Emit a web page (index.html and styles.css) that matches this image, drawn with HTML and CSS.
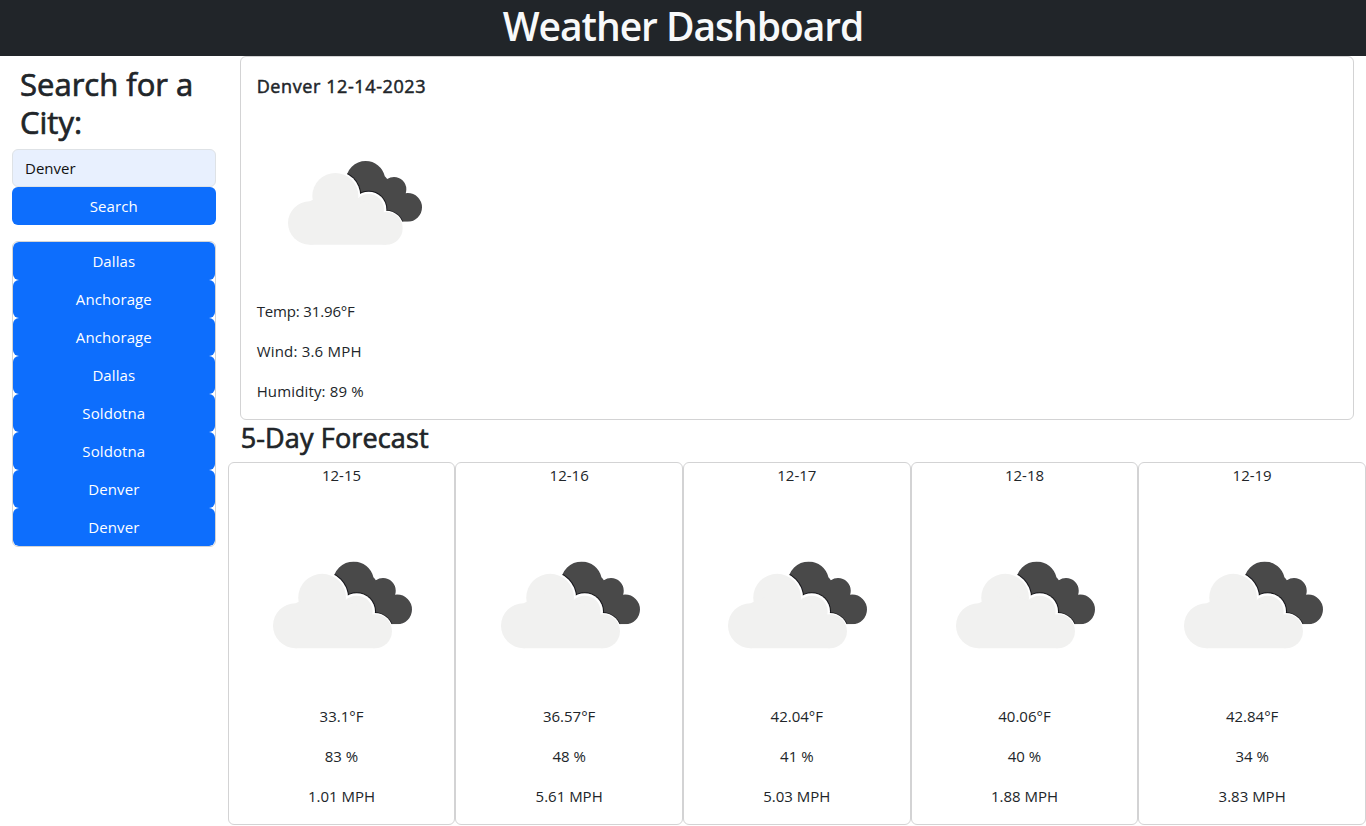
FILE: index.html
```
<!DOCTYPE html>
<html lang="en">
<head>
<meta charset="utf-8">
<title>Weather Dashboard</title>
<link rel="stylesheet" href="styles.css">
</head>
<body>
<svg class="defs" aria-hidden="true">
  <defs>
    <clipPath id="dark-clip">
      <circle cx="287" cy="92" r="59"/><circle cx="372" cy="118" r="37"/><circle cx="413" cy="172" r="43"/><path d="M240 60L346 80L400 150L413 215H340L240 160Z"/>
    </clipPath>
    <filter id="soft"><feGaussianBlur stdDeviation="2"/></filter>
    <filter id="edge"><feGaussianBlur stdDeviation="1.8"/></filter>
    <symbol id="clouds" viewBox="0 0 510 330">
      <g filter="url(#edge)">
        <g clip-path="url(#dark-clip)">
          <path fill="#48484a" d="M220 20H470V230H220Z"/>
          <g fill="#18181a" filter="url(#soft)"><circle cx="196" cy="138" r="78"/><circle cx="296" cy="178" r="56"/><circle cx="348" cy="235" r="55"/></g>
        </g>
        <g fill="#fff"><circle cx="196" cy="138" r="75"/><circle cx="296" cy="178" r="53"/><circle cx="348" cy="235" r="53"/></g>
        <g fill="#f1f1f0"><circle cx="119" cy="219" r="65"/><circle cx="196" cy="138" r="69"/><circle cx="296" cy="178" r="46"/><circle cx="349" cy="235" r="49"/><path d="M119 154L196 120L296 160L348 200V284H119Z"/></g>
      </g>
    </symbol>
  </defs>
</svg>
<header class="header"><h1 class="title">Weather Dashboard</h1></header>
<div class="layout">
  <aside class="sidebar">
    <h2 class="search-title">Search for a City:</h2>
    <input class="search-input" type="text" value="Denver">
    <button class="btn">Search</button>
    <div class="history">
      <button class="btn">Dallas</button>
      <button class="btn">Anchorage</button>
      <button class="btn">Anchorage</button>
      <button class="btn">Dallas</button>
      <button class="btn">Soldotna</button>
      <button class="btn">Soldotna</button>
      <button class="btn">Denver</button>
      <button class="btn">Denver</button>
    </div>
  </aside>
  <main class="content">
    <section class="card current">
      <h5 class="city">Denver 12-14-2023</h5>
      <svg class="current-icon"><use href="#clouds"/></svg>
      <p class="temp">Temp: 31.96°F</p>
      <p class="wind">Wind: 3.6 MPH</p>
      <p class="humidity">Humidity: 89 %</p>
    </section>
    <h3 class="forecast-title">5-Day Forecast</h3>
    <section class="forecast">
      <article class="card day"><p class="date">12-15</p><svg class="day-icon"><use href="#clouds"/></svg><p>33.1°F</p><p>83 %</p><p>1.01 MPH</p></article>
      <article class="card day"><p class="date">12-16</p><svg class="day-icon"><use href="#clouds"/></svg><p>36.57°F</p><p>48 %</p><p>5.61 MPH</p></article>
      <article class="card day"><p class="date">12-17</p><svg class="day-icon"><use href="#clouds"/></svg><p>42.04°F</p><p>41 %</p><p>5.03 MPH</p></article>
      <article class="card day"><p class="date">12-18</p><svg class="day-icon"><use href="#clouds"/></svg><p>40.06°F</p><p>40 %</p><p>1.88 MPH</p></article>
      <article class="card day"><p class="date">12-19</p><svg class="day-icon"><use href="#clouds"/></svg><p>42.84°F</p><p>34 %</p><p>3.83 MPH</p></article>
    </section>
  </main>
</div>
</body>
</html>
```
FILE: styles.css
```
* { box-sizing: border-box; }
body { margin: 0; background: #fff; color: #212529; font: 400 15px/24px "Open Sans", "Noto Sans", sans-serif; overflow: hidden; }
h1, h2, h3, h5, p { margin: 0; }
.defs { display: block; width: 0; height: 0; }
.header { height: 56px; background: #212529; color: #f8f9fa; text-align: center; }
.title { font-size: 39px; line-height: 52px; font-weight: 600; letter-spacing: -1.05px; }
.layout { display: flex; height: 770px; }
.sidebar { width: 16.6667%; padding: 8px 12px 0; }
.search-title { padding: 1px 8px 0; margin-bottom: 8px; font-size: 31px; line-height: 38px; font-weight: 400; -webkit-text-stroke: 0.7px currentColor; }
.search-input { display: block; width: 100%; height: 38px; padding: 6px 12px; border: 1px solid #dee2e6; border-radius: 6px; background: #e8f0fe; color: #111; font: inherit; }
.btn { display: block; width: 100%; height: 38px; padding: 6px 12px; border: 0; border-radius: 6px; background: #0d6efd; color: #fff; font: inherit; line-height: 26px; letter-spacing: 0.1px; text-align: center; }
.history { margin-top: 16px; border: 1px solid #d3d4d5; border-radius: 6px; overflow: hidden; }
.content { width: 83.3333%; }
.card { border: 1px solid #d3d3d4; border-radius: 6px; background: #fff; }
.current { height: 364px; margin: 0 12px; padding: 16px; }
.city { height: 32px; font-size: 18px; line-height: 26px; font-weight: 400; letter-spacing: 0.6px; -webkit-text-stroke: 0.5px currentColor; }
.current-icon { display: block; width: 170px; height: 110px; margin: 45px 0 39px 13px; }
.current p + p, .day p + p { margin-top: 16px; }
.temp { letter-spacing: -0.15px; }
.wind { letter-spacing: 0.2px; }
.humidity { letter-spacing: 0.15px; }
.forecast-title { height: 42px; padding: 1px 13px 0; font-size: 27px; line-height: 34px; font-weight: 400; letter-spacing: 0.15px; -webkit-text-stroke: 0.7px currentColor; }
.forecast { display: grid; grid-template-columns: repeat(5, 1fr); height: 363px; }
.day { text-align: center; }
.day-icon { display: block; width: 177px; height: 114.1px; margin: 62.9px auto 40px; position: relative; left: 1px; }
```
